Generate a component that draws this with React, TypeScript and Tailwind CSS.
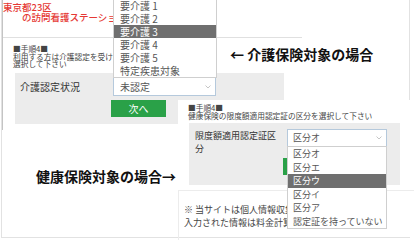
import React from 'react';

const jp = "font-['Noto_Sans_CJK_JP',sans-serif]";

const careLevels = ['要介護 1', '要介護 2', '要介護 3', '要介護 4', '要介護 5', '特定疾患対象'];
const limitClasses = ['区分オ', '区分エ', '区分ウ', '区分イ', '区分ア', '認定証を持っていない'];

const Chevron = () => (
  <svg width="6" height="4" viewBox="0 0 6 4" className="absolute right-[4px] top-1/2 -translate-y-1/2">
    <path d="M0.5 0.5 L3 3 L5.5 0.5" fill="none" stroke="#b8b8b8" strokeWidth="0.8" />
  </svg>
);

const App = () => {
  return (
    <div className={`relative w-[414px] h-[240px] overflow-hidden bg-white ${jp}`}>
      {/* outer frame */}
      <div className="absolute left-[1px] top-0 right-[4px] bottom-[2px] border-l border-r border-b border-[#e2e2e2]" />

      {/* screenshot 1: 介護保険 */}
      <div className="absolute left-[2px] top-0 w-[300px] h-[130px] border-l border-[#c4c4c4]">
        <div className="h-[38px] border-b border-[#e0e0e0] pt-[2px] text-[9.5px] leading-[10px] font-medium text-[#e53935]">
          <div>東京都23区</div>
          <div className="pl-[19px]">の訪問看護ステーション</div>
        </div>

        <div className="pt-[7px] pl-[10px] text-[7.7px] leading-[7.5px] text-[#444] whitespace-nowrap">
          <div>■手順4■</div>
          <div>利用する方は介護認定を受けている場合、介護度を</div>
          <div>選択して下さい</div>
        </div>

        <div className="ml-[12px] mt-[5.5px] w-[269px] h-[51px] bg-[#ececec] flex pt-[4px]">
          <div className="w-[96px] pl-[5px] text-[10px] leading-[19px] text-[#333]">介護認定状況</div>
          <div className="flex flex-col">
            <div className="relative ml-[2px] w-[103px] h-[19px] bg-white border border-[#b5c9dc] text-[10px] leading-[17px] pl-[6px] text-[#555]">
              未認定
              <Chevron />
              {/* open list */}
              <div className="absolute left-[-1px] bottom-full w-[104px] bg-white border border-[#cfcfcf] text-[10px] text-[#555]">
                {careLevels.map((lv, i) => (
                  <div
                    key={lv}
                    className={`h-[13px] leading-[13px] pl-[6px] ${i === 2 ? 'bg-[#6f6f6f] text-white' : ''}`}
                  >
                    {lv}
                  </div>
                ))}
              </div>
            </div>
            <button className="mt-[4px] w-[55px] h-[17px] bg-[#2aa148] text-white text-[10px] leading-[17px] text-center">
              次へ
            </button>
          </div>
        </div>
      </div>

      {/* annotations */}
      <div className="absolute left-[230px] top-[45px] text-[14px] leading-[18px] font-bold text-[#111]">
        ← 介護保険対象の場合
      </div>
      <div className="absolute left-[36px] top-[167px] text-[14px] leading-[18px] font-bold text-[#111]">
        健康保険対象の場合→
      </div>

      {/* screenshot 2: 健康保険 */}
      <div className="absolute left-[178px] top-[100px] right-0 bottom-[3px] bg-white">
        <div className="pt-[4px] pl-[10px] text-[7.7px] leading-[7.5px] text-[#444] whitespace-nowrap">
          <div>■手順4■</div>
          <div>健康保険の限度額適用認定証の区分を選択して下さい</div>
        </div>

        <div className="ml-[11px] mr-[14px] mt-[4px] h-[62px] bg-[#ececec] flex">
          <div className="w-[92px] pl-[6px] pt-[7px] text-[9px] leading-[12.5px] text-[#333]">
            限度額適用認定証区分
          </div>
          <div className="flex flex-col pt-[6px]">
            <div className="relative ml-[6px] w-[100px] h-[18px] bg-white border border-[#b5c9dc] text-[9px] leading-[16px] pl-[5px] text-[#555]">
              区分オ
              <Chevron />
              <div className="absolute left-[-1px] top-full z-10 w-[100px] bg-white border border-[#cfcfcf] text-[9px] text-[#555]">
                {limitClasses.map((c, i) => (
                  <div
                    key={c}
                    className={`h-[13.5px] leading-[13.5px] pl-[5px] whitespace-nowrap ${i === 2 ? 'bg-[#6f6f6f] text-white' : ''}`}
                  >
                    {c}
                  </div>
                ))}
              </div>
            </div>
            <button className="mt-[11px] ml-[2px] w-[55px] h-[17px] bg-[#2aa148] text-white text-[9px] leading-[17px] text-center">
              次へ
            </button>
          </div>
        </div>

        <div className="mt-[5px] h-[60px] border-t border-l border-[#ececec] pt-[12px] pl-[5px] text-[9px] leading-[13px] text-[#444] whitespace-nowrap">
          <div>※ 当サイトは個人情報収集を行いません。</div>
          <div>入力された情報は料金計算のみに使用します。</div>
        </div>
      </div>
    </div>
  );
};

export default App;
